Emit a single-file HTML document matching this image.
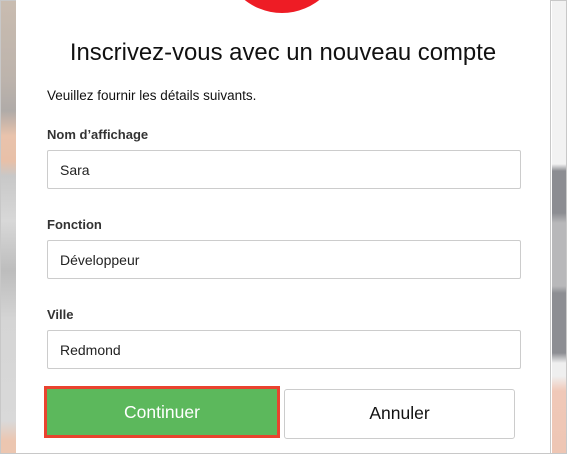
<!DOCTYPE html>
<html><head><style>
body{margin:0;width:567px;height:454px;overflow:hidden;position:relative;font-family:"Liberation Sans",Arial,sans-serif;background:#fff}
.frame{position:absolute;left:0;top:0;width:565px;height:452px;border:1px solid #c8c8c8}
.ls{position:absolute;left:1px;top:1px;width:15px;height:452px;background:linear-gradient(#c9bcb0 0,#bcb3ac 80px,#b0aba8 110px,#e9c3ac 135px,#e8c0a8 160px,#c8c8c8 175px,#d8d8d8 220px,#bdbdbd 270px,#d5d5d5 320px,#d9d9d9 420px,#ecc6b0 440px)}
.rs{position:absolute;left:552px;top:1px;width:14px;height:452px;background:linear-gradient(#f2f2f2 0,#f2f2f2 163px,#8c8d92 170px,#8c8d92 212px,#b8b8ba 222px,#b8b8ba 285px,#8d8e93 292px,#8d8e93 352px,#efefef 362px,#efefef 375px,#f0c8b8 390px,#eec6b4 452px)}
.panel{position:absolute;left:16px;top:0;width:534px;height:453px;background:#fff;border-right:1px solid #c8c8c8;overflow:hidden}
.circ{position:absolute;left:206px;top:-107px;width:120px;height:120px;border-radius:50%;background:#ee1c25}
h1{position:absolute;left:0;width:534px;top:39px;margin:0;text-align:center;font-weight:normal;font-size:23.9px;color:#111}
.p{position:absolute;left:31px;top:88px;font-size:13.5px;color:#111}
.l{position:absolute;left:31px;font-size:13px;font-weight:bold;color:#333}
.in{position:absolute;left:31px;border:1px solid #ccc;border-radius:2px;box-sizing:border-box;width:474px;height:39px;font-size:14px;color:#222;padding:11px 0 0 12px}
.go{position:absolute;left:28px;top:386px;width:236px;height:52px;box-sizing:border-box;border:3px solid #e9432f;background:#5cb85c;color:#fff;font-size:17.5px;text-align:center;line-height:46px}
.no{position:absolute;left:268px;top:389px;width:231px;height:50px;box-sizing:border-box;border:1px solid #ccc;border-radius:3px;color:#111;font-size:17.5px;text-align:center;line-height:47px}
</style></head><body>
<div class="frame"></div>
<div class="ls"></div><div class="rs"></div>
<div class="panel">
<div class="circ"></div>
<h1>Inscrivez-vous avec un nouveau compte</h1>
<div class="p">Veuillez fournir les détails suivants.</div>
<div class="l" style="top:127px">Nom d’affichage</div>
<div class="in" style="top:150px">Sara</div>
<div class="l" style="top:217px">Fonction</div>
<div class="in" style="top:240px">Développeur</div>
<div class="l" style="top:307px">Ville</div>
<div class="in" style="top:330px">Redmond</div>
<div class="go">Continuer</div>
<div class="no">Annuler</div>
</div>
</body></html>
